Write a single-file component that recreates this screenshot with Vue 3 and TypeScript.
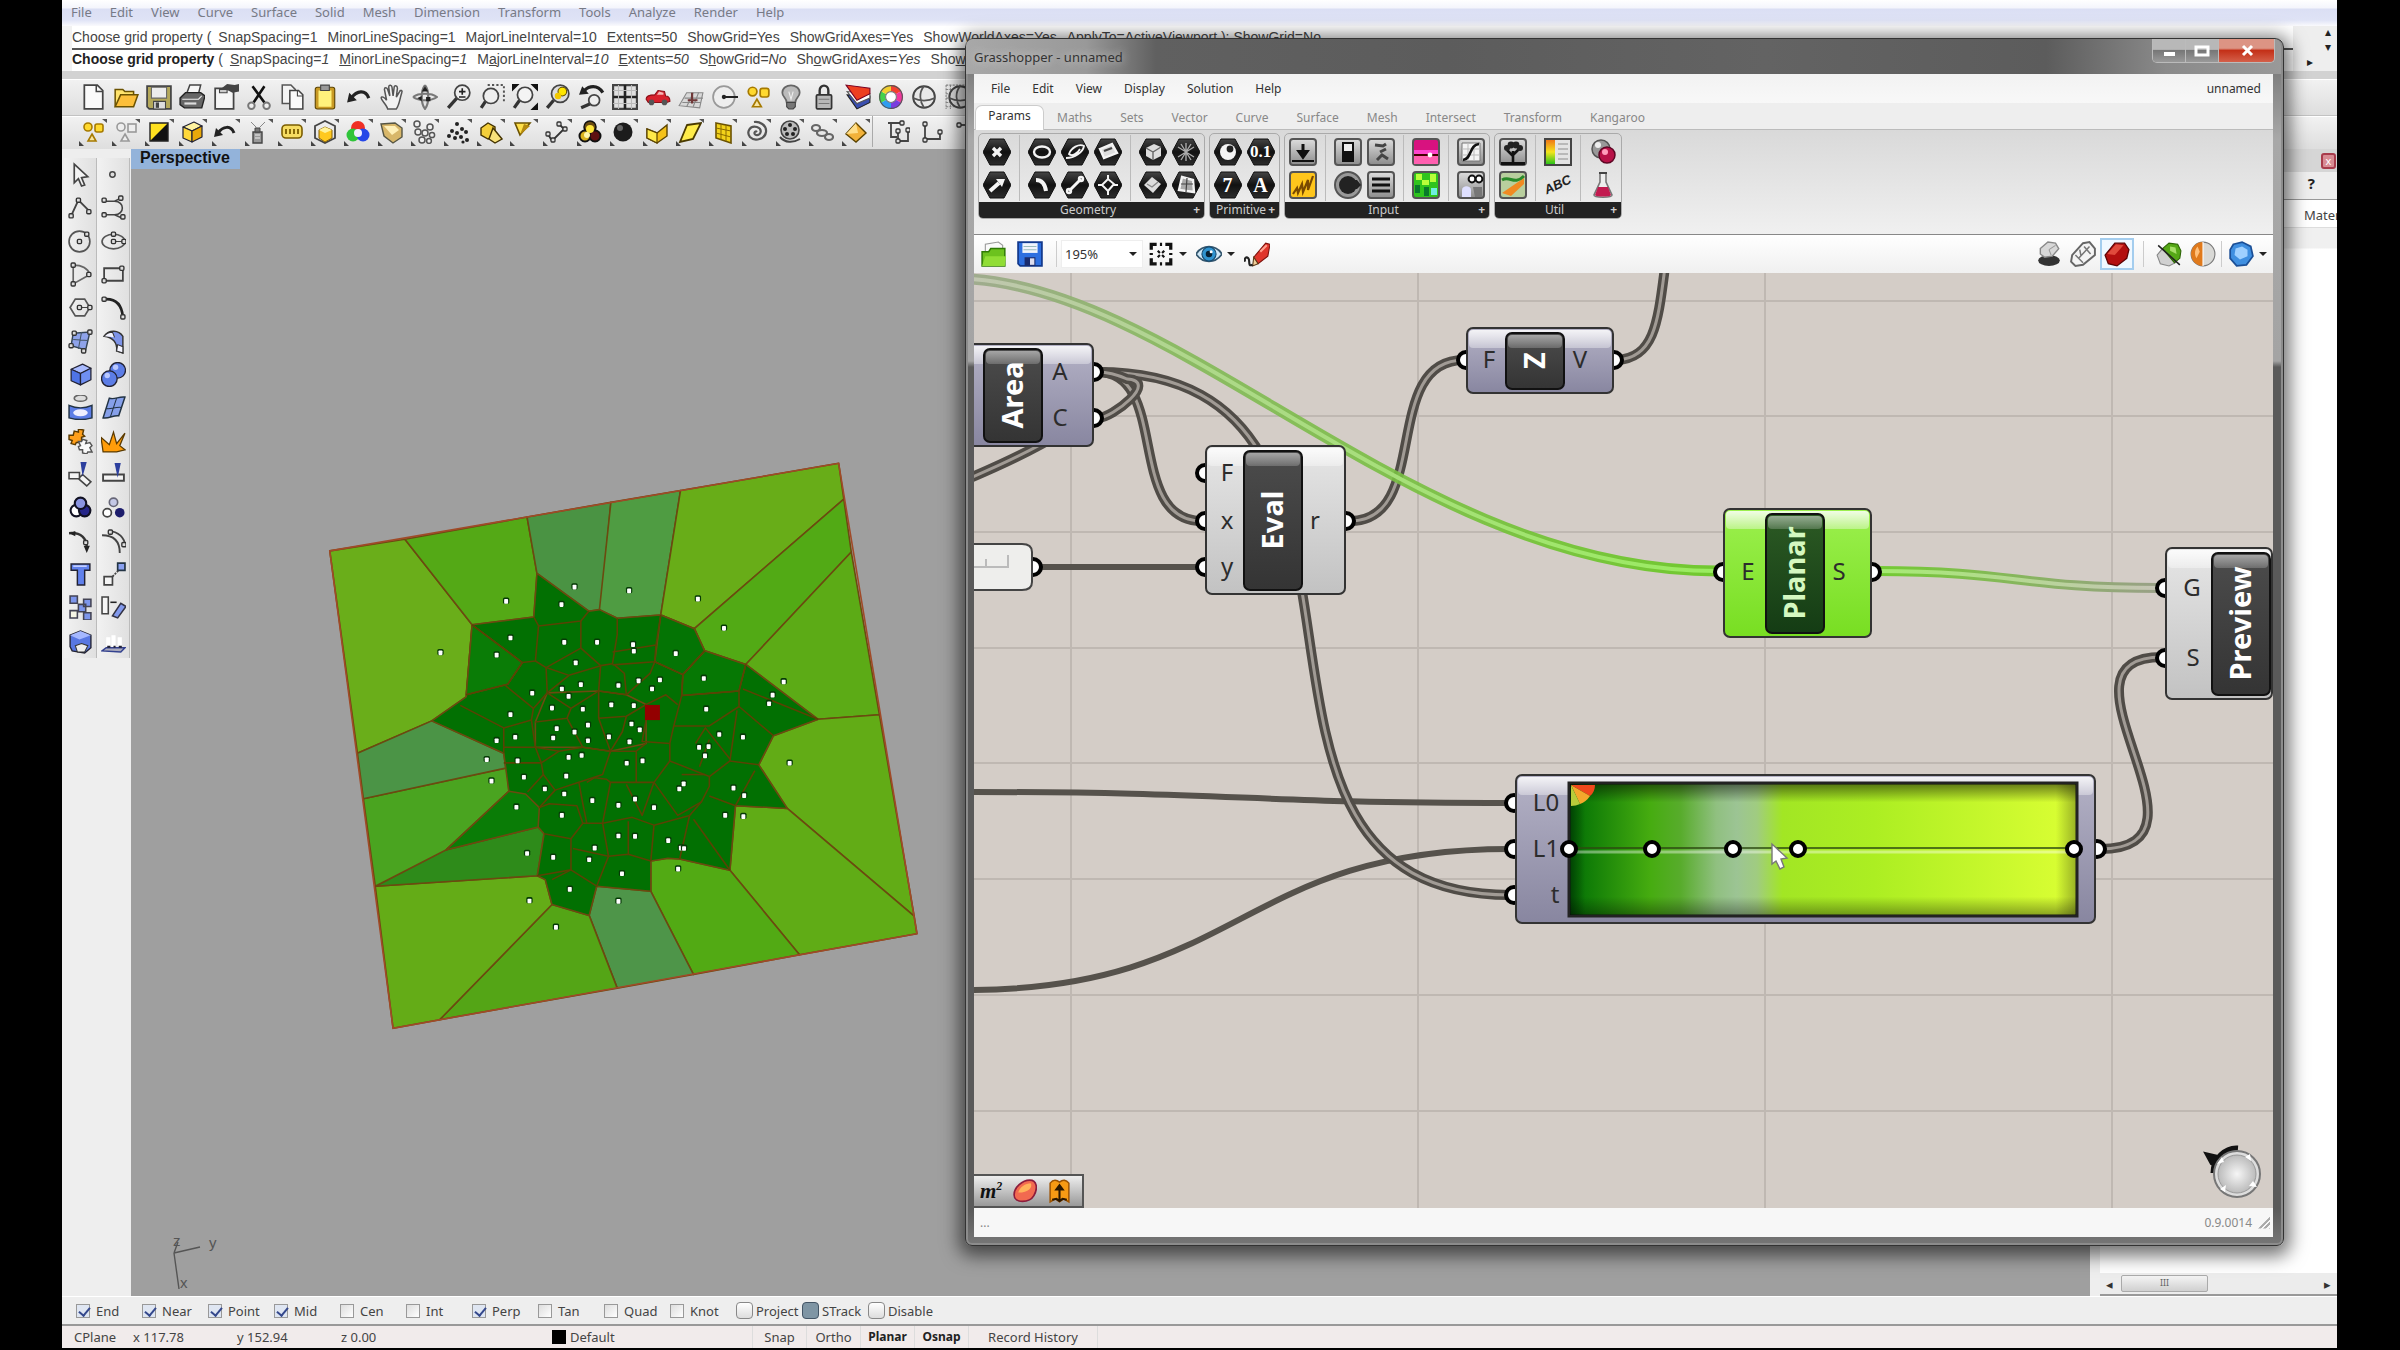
<script setup lang="ts">
import { ref } from 'vue'

const rhinoMenus = ['File', 'Edit', 'View', 'Curve', 'Surface', 'Solid', 'Mesh', 'Dimension', 'Transform', 'Tools', 'Analyze', 'Render', 'Help']

interface Option { name: string; value: string; key?: number }
const history: Option[] = [
  { name: 'SnapSpacing', value: '1' },
  { name: 'MinorLineSpacing', value: '1' },
  { name: 'MajorLineInterval', value: '10' },
  { name: 'Extents', value: '50' },
  { name: 'ShowGrid', value: 'Yes' },
  { name: 'ShowGridAxes', value: 'Yes' },
  { name: 'ShowWorldAxes', value: 'Yes' },
  { name: 'ApplyTo', value: 'ActiveViewport ): ShowGrid=No' }
]
const prompt: Option[] = [
  { name: 'SnapSpacing', value: '1', key: 0 },
  { name: 'MinorLineSpacing', value: '1', key: 0 },
  { name: 'MajorLineInterval', value: '10', key: 1 },
  { name: 'Extents', value: '50', key: 0 },
  { name: 'ShowGrid', value: 'No', key: 1 },
  { name: 'ShowGridAxes', value: 'Yes', key: 2 },
  { name: 'ShowWorldAxes', value: 'Yes', key: 3 }
]

const undoArrow = '<path d="M21 13C18 5 10 6 5 13" fill="none" stroke="#222" stroke-width="3"/><path d="M1 17l2-9 7 7z" fill="#222"/>'
const lens = (x: number, y: number, r: number, fill: string) =>
  `<path d="M${x - r + 2} ${y + r - 2}L2 22" stroke="#333" stroke-width="3"/><circle cx="${x}" cy="${y}" r="${r}" fill="${fill}" stroke="#444" stroke-width="1.6"/>`
const cube = (top: string, left: string, right: string) =>
  `<g stroke="#223" stroke-width="1.2" stroke-linejoin="round"><path d="M3 7l11-5 8 4-10 5z" fill="${top}"/><path d="M3 7l9 4v11l-9-4z" fill="${left}"/><path d="M12 11l10-5v11l-10 5z" fill="${right}"/></g>`
const pt = (x: number, y: number) => `<rect x="${x - 2}" y="${y - 2}" width="4" height="4" rx="1" fill="#ddd" stroke="#333" stroke-width="1.3"/>`

const icons: Record<string, string> = {
  new: '<path d="M4 1h12l5 5v17H4z" fill="#fafafa" stroke="#444" stroke-width="1.6"/><path d="M15 1v6h6" fill="none" stroke="#444" stroke-width="1.4"/>',
  open: '<path d="M2 21V5h7l2 2h8v4" fill="#ffe36b" stroke="#6b5200" stroke-width="1.4"/><path d="M2 21l5-11h16l-4 11z" fill="#fcbf3a" stroke="#6b5200" stroke-width="1.4"/>',
  save: '<path d="M1 2h22v21H3l-2-2z" fill="#b4a85a" stroke="#444" stroke-width="1.6"/><path d="M5 3h14v10H5z" fill="#ececec" stroke="#666"/><path d="M7 16h11v7H7z" fill="#ddd" stroke="#444"/><path d="M9 17h3v5H9z" fill="#444"/>',
  print: '<path d="M7 9l3-8h10l-2 8z" fill="#f6f6f6" stroke="#444" stroke-width="1.4"/><path d="M1 13l5-5h14l4 3-3 11H5l-4-3z" fill="#666" stroke="#222" stroke-width="1.3"/><path d="M3 14h15l3-3" stroke="#eee" fill="none"/><path d="M5 18h11" stroke="#ddd" stroke-width="2"/>',
  props: '<path d="M2 4h14l3 3v16H2z" fill="#f6f6f6" stroke="#444" stroke-width="1.6"/><path d="M8 4l5-4 7 1 4-1v7l-6 1-4-2z" fill="#444"/><path d="M6 5h7v3H6z" fill="#ccc" stroke="#444"/>',
  cut: '<path d="M6 2l11 15M17 2L7 17" stroke="#111" stroke-width="2.4"/><circle cx="5" cy="20" r="3" fill="#eee" stroke="#777" stroke-width="1.8"/><circle cx="19" cy="20" r="3" fill="#eee" stroke="#777" stroke-width="1.8"/>',
  copy: '<path d="M3 1h8l4 4v13H3z" fill="#f4f4f4" stroke="#555" stroke-width="1.4"/><path d="M10 6h8l4 4v13H10z" fill="#fafafa" stroke="#444" stroke-width="1.4"/><path d="M17 6v5h5" fill="none" stroke="#444"/>',
  paste: '<rect x="3" y="3" width="18" height="20" rx="2" fill="#c99a25" stroke="#5b4300"/><path d="M6 6h12v15H6z" fill="#fff27c"/><path d="M8 1h8v5H8z" fill="#999" stroke="#444"/>',
  undo: undoArrow,
  hand: '<path d="M8 23c-1-4-6-8-6-10s3-1 5 2L5 5c0-2 2-2 3 0l2 6-1-8c0-3 3-2 3 0l1 8 1-8c0-2 3-2 3 1l-1 8 3-5c1-2 3-1 2 1-2 6-2 11-5 15z" fill="#f2f2f2" stroke="#555" stroke-width="1.4"/>',
  rotate: '<path d="M1 12c5-4 17-4 22 0-5 4-17 4-22 0M12 1c-4 5-4 17 0 22 4-5 4-17 0-22" fill="none" stroke="#777" stroke-width="2"/><path d="M9 7l3-5 3 5zM5 13l4-2v5zM13 12h4v4h-4z" fill="#222"/>',
  zoomDyn: lens(15, 8, 7, '#eee') + '<path d="M12 7h6M15 4v6M12 12h6" stroke="#222" stroke-width="1.5"/>',
  zoomWin: '<path d="M8 1h15v16" fill="none" stroke="#555" stroke-width="1.8" stroke-dasharray="2 2"/>' + lens(11, 11, 7, '#eee'),
  zoomExt: '<path d="M0 0h7L0 7zM24 0v7l-7-7zM24 24h-7l7-7z" fill="#111"/>' + lens(12, 10, 7, '#f4f4f4'),
  zoomSel: lens(14, 9, 8, '#ddd') + '<circle cx="16" cy="7" r="4" fill="#ffe600" stroke="#665200"/><circle cx="12" cy="11" r="3" fill="#f2c900"/>',
  undoView: '<path d="M22 8C17 0 9 2 5 6" fill="none" stroke="#222" stroke-width="3"/><path d="M0 10l3-8 6 7z" fill="#222"/>' + lens(14, 15, 5, '#eee'),
  fourView: '<path d="M1 1h22v22H1z" fill="#e0e0e0" stroke="#444" stroke-width="2"/><path d="M12 1v22M1 12h22" stroke="#222" stroke-width="2.4"/><path d="M6 1v22M18 1v22M1 6h22M1 18h22" stroke="#bbb" stroke-width="1"/>',
  car: '<path d="M1 14c0-4 5-4 8-4l3-4 6 1 1 4c4 0 4 3 4 5l-3 1H3z" fill="#d8202c" stroke="#8b1018"/><circle cx="6" cy="17" r="2.6" fill="#555"/><circle cx="18" cy="17" r="2.6" fill="#555"/><path d="M11 10l2-3 4 1v2z" fill="#f6b5b5"/>',
  cplane: '<path d="M1 20l7-12h15l-3 14z" fill="#d8d8d8" stroke="#888"/><path d="M4 17h17M6 13h17M8 21l6-13M14 21l5-13" stroke="#888"/><path d="M9 15h9M13 18V8" stroke="#703838" stroke-width="2"/>',
  circleLine: '<circle cx="11" cy="12" r="10" fill="#eee" stroke="#999" stroke-width="1.6"/><path d="M11 12h13" stroke="#222" stroke-width="1.8"/><circle cx="11" cy="12" r="2" fill="#222"/>',
  shapes: '<circle cx="7" cy="7" r="4" fill="#ffd92e" stroke="#a67a00" stroke-width="1.6"/><rect x="14" y="4" width="8" height="8" rx="2" fill="#ffd92e" stroke="#a67a00" stroke-width="1.6"/><path d="M11 14l4 7H7z" fill="#f7e4a0" stroke="#a67a00" stroke-width="1.6"/>',
  greyShapes: '<circle cx="7" cy="7" r="4" fill="#eee" stroke="#999" stroke-width="1.6"/><rect x="14" y="4" width="8" height="8" fill="#eee" stroke="#999" stroke-width="1.6"/><path d="M11 14l4 7H7z" fill="#eee" stroke="#999" stroke-width="1.6"/>',
  bulb: '<path d="M8 17C8 13 4 12 4 8c0-9 16-9 16 0 0 4-4 5-4 9z" fill="#bbb" stroke="#666" stroke-width="1.6"/><path d="M8 17h8v4l-2 2h-4l-2-2z" fill="#777" stroke="#444"/><path d="M10 7l2 7 2-7" stroke="#eee" fill="none"/>',
  lock: '<path d="M8 11V6c0-6 8-6 8 0v5" fill="none" stroke="#333" stroke-width="2.2"/><rect x="5" y="10" width="14" height="13" rx="1" fill="#b8b8b8" stroke="#333" stroke-width="1.6"/><path d="M7 14h10M7 18h10" stroke="#777"/>',
  layers: '<path d="M2 10l9 13 12-6v-6z" fill="#3a4fb0" stroke="#222"/><path d="M2 7l9 11 12-5V9z" fill="#fff" stroke="#555"/><path d="M1 1l10 14L23 9V4z" fill="#ee3f20" stroke="#702"/>',
  globe: '<circle cx="12" cy="12" r="10" fill="#e8e8e8" stroke="#444" stroke-width="1.8"/><path d="M2 13c6 3 14 3 20 0M12 2c-5 6-4 14 0 20" fill="none" stroke="#555" stroke-width="1.6"/>',
  globeGrid: '<path d="M1 1h22M1 5h22M1 9h22M1 13h22M1 17h22M1 21h22M1 1v22M5 1v22" stroke="#888" stroke-dasharray="2 1"/><circle cx="14" cy="12" r="10" fill="#ddd" stroke="#444" stroke-width="1.8"/><path d="M4 13c6 3 14 3 20 0M14 2c-5 6-4 14 0 20" fill="none" stroke="#555" stroke-width="1.6"/>',
  wheel: '<g fill="none" stroke-width="6"><path d="M12 4a8 8 0 0 1 7 4" stroke="#f2402f"/><path d="M19 8a8 8 0 0 1 0 8" stroke="#f0389c"/><path d="M19 16a8 8 0 0 1-7 4" stroke="#7a3de0"/><path d="M12 20a8 8 0 0 1-7-4" stroke="#2f9df0"/><path d="M5 16a8 8 0 0 1 0-8" stroke="#43d14a"/><path d="M5 8a8 8 0 0 1 7-4" stroke="#f2cf2f"/></g><circle cx="12" cy="12" r="10.5" fill="none" stroke="#555"/><circle cx="12" cy="12" r="5" fill="#fff" stroke="#777"/>',
  half: '<path d="M3 3h18v18H3z" fill="#111"/><path d="M3 3h18L3 21z" fill="#ffe11f"/><path d="M3 3h18v18H3z" fill="none" stroke="#222" stroke-width="1.4"/>',
  yCube: cube('#fff3a0', '#ffd83a', '#e8a90a'),
  spray: '<path d="M7 12h9v11H7z" fill="#999" stroke="#444" stroke-width="1.4"/><path d="M9 8h5v4H9z" fill="#777" stroke="#444"/><path d="M11 8L5 2M13 8l6-6" stroke="#888"/><path d="M9 15h5M9 18h5" stroke="#eee"/>',
  wrap: '<rect x="2" y="5" width="20" height="13" rx="4" fill="#f6dc62" stroke="#7a5c00" stroke-width="1.6"/><path d="M6 9v5M10 9v5M14 9v5M18 9v5" stroke="#7a5c00" stroke-width="1.8"/>',
  cage: '<path d="M2 6l10-5 10 5v12l-10 5-10-5z" fill="none" stroke="#444" stroke-width="1.8"/><path d="M6 10l6-3 7 3v8l-7 4-6-4z" fill="#ffc91f" stroke="#8a6200"/><path d="M6 10l6 3 7-3-7-3z" fill="#fff39a"/>',
  rgb: '<circle cx="12" cy="8" r="7" fill="#f02f24"/><circle cx="7" cy="15" r="6.5" fill="#2fc43a"/><circle cx="17" cy="15" r="6.5" fill="#2547e8"/><circle cx="12" cy="13" r="4" fill="#eef"/>',
  chip: '<path d="M2 4l14-1 7 5v9l-9 6-9-7z" fill="#d8b76a" stroke="#554" stroke-width="1.4"/><path d="M5 6h11l4 4-7 5z" fill="#fff0b8"/>',
  circles: '<g fill="#eee" stroke="#555" stroke-width="1.5"><circle cx="5" cy="4" r="3"/><circle cx="18" cy="7" r="3"/><circle cx="6" cy="12" r="3"/><circle cx="13" cy="13" r="3"/><circle cx="20" cy="15" r="2.6"/><circle cx="10" cy="20" r="3"/><circle cx="17" cy="21" r="2.4"/></g>',
  dots: '<g fill="#222"><circle cx="12" cy="4" r="2"/><circle cx="17" cy="9" r="2"/><circle cx="7" cy="11" r="2"/><circle cx="12" cy="13" r="2"/><circle cx="21" cy="12" r="2"/><circle cx="4" cy="16" r="2"/><circle cx="10" cy="18" r="2"/><circle cx="16" cy="17" r="2"/><circle cx="22" cy="20" r="2"/><circle cx="18" cy="22" r="1.6"/></g>',
  solids: '<path d="M2 8l7-5 7 4v9l-7 3-7-4z" fill="#f4cf3a" stroke="#443300" stroke-width="1.4"/><path d="M14 8l9 11-7 4-6-4z" fill="#f9e27a" stroke="#443300" stroke-width="1.4"/>',
  flag: '<path d="M3 3h15L8 15z" fill="#ffe04a" stroke="#6b5200" stroke-width="1.6"/><path d="M12 4l6 2-10 9" fill="#b58a10"/>',
  poly: '<path d="M3 14l4 7L19 9l-5-5" fill="none" stroke="#333" stroke-width="1.8"/>' + pt(3, 14) + pt(8, 20) + pt(20, 9) + pt(14, 4),
  balls: '<circle cx="12" cy="7" r="6" fill="#6b4c10" stroke="#111" stroke-width="1.5"/><circle cx="7" cy="16" r="5.5" fill="#d9b21d" stroke="#111" stroke-width="2"/><circle cx="17" cy="16" r="5.5" fill="#5e1111" stroke="#111" stroke-width="2"/><circle cx="12" cy="9" r="4" fill="#ffe63c"/><circle cx="9" cy="15" r="3" fill="#fff7a8"/>',
  ball: '<circle cx="12" cy="12" r="9.5" fill="#1c1c1c"/><circle cx="9" cy="8" r="3" fill="#666"/>',
  box: '<path d="M2 9l10 4 10-8v11L12 23 2 18z" fill="#f5c21a" stroke="#5b4300" stroke-width="1.4"/><path d="M2 9l10 4v10L2 18z" fill="#ffe94a" stroke="#5b4300" stroke-width="1.2"/>',
  plane: '<path d="M9 5l14-2-8 16-13 3z" fill="#ffec4a" stroke="#4a3a00" stroke-width="1.8"/>',
  ygrid: '<path d="M5 3l15 3v17L5 18z" fill="#f2d21a" stroke="#6b5200" stroke-width="1.6"/><path d="M10 4v15M15 5v16M5 8l15 3M5 13l15 4" stroke="#8a6b00"/>',
  spiral: '<path d="M13 12c-2-2-4 2-1 3 5 1 7-6 1-8C6 5 2 12 6 17c5 5 15 2 16-5S15 1 10 2" fill="none" stroke="#555" stroke-width="2.2"/>',
  film: '<circle cx="13" cy="10" r="9" fill="#bbb" stroke="#444" stroke-width="1.6"/><g fill="#222"><circle cx="13" cy="5" r="2"/><circle cx="8" cy="9" r="2"/><circle cx="18" cy="9" r="2"/><circle cx="10" cy="14" r="2"/><circle cx="16" cy="14" r="2"/></g><path d="M3 17c5 6 13 6 20 2" fill="none" stroke="#444" stroke-width="2"/>',
  chain: '<g fill="none" stroke="#666" stroke-width="2.2"><ellipse cx="6" cy="8" rx="4" ry="3"/><ellipse cx="12" cy="13" rx="5" ry="3"/><ellipse cx="19" cy="17" rx="4" ry="3"/></g>',
  diamond: '<path d="M12 3l10 10-10 9L2 14z" fill="#f2b23a" stroke="#5b4300" stroke-width="1.4"/><path d="M12 3L2 14l12-1z" fill="#ffdf8a"/>',
  dimA: '<path d="M2 3h14M5 3v14h6M12 11v10h10V10" fill="none" stroke="#444" stroke-width="1.8"/>' + pt(16, 3) + pt(12, 11) + pt(22, 10) + pt(12, 21),
  dimB: '<path d="M5 3v16h15V10" fill="none" stroke="#444" stroke-width="1.8"/>' + pt(5, 4) + pt(20, 12) + pt(5, 20),
  dimC: '<path d="M4 5h18" fill="none" stroke="#444" stroke-width="1.8"/>' + pt(5, 5),

  select: '<path d="M6 2l13 12-6 1 3 7-3 1-3-7-4 4z" fill="#f4f4f4" stroke="#444" stroke-width="1.6"/>',
  point: '<circle cx="11" cy="12" r="2.6" fill="#ddd" stroke="#444" stroke-width="1.4"/>',
  polyline: '<path d="M3 20L10 5l11 11" fill="none" stroke="#444" stroke-width="1.8"/>' + pt(3, 20) + pt(10, 5) + pt(20, 16),
  curve: '<path d="M3 6h10c10 0 10 13 0 13H3M13 6l6-3M13 19l7 3" fill="none" stroke="#444" stroke-width="1.5"/>' + pt(3, 5) + pt(3, 19) + pt(19, 3) + pt(21, 21),
  circle: '<circle cx="11" cy="12" r="10" fill="none" stroke="#555" stroke-width="1.6"/>' + pt(11, 12) + pt(18, 5),
  ellipse: '<ellipse cx="12" cy="12" rx="11" ry="7" fill="none" stroke="#555" stroke-width="1.6"/><path d="M12 12h11" stroke="#444"/>' + pt(12, 12) + pt(12, 5) + pt(22, 12),
  arc: '<path d="M5 3c8 0 14 3 16 9L5 21z" fill="none" stroke="#666" stroke-width="1.6"/>' + pt(5, 3) + pt(20, 12) + pt(5, 21),
  rect: '<path d="M3 6h18v12H3z" fill="none" stroke="#444" stroke-width="1.7"/>' + pt(20, 6) + pt(3, 18),
  polygon: '<path d="M7 4h9l5 8-5 8H7l-5-8z" fill="none" stroke="#555" stroke-width="1.6"/><path d="M11 12h10" stroke="#444"/>' + pt(11, 12) + pt(21, 12),
  fillet: '<path d="M3 4c12-1 17 6 18 17" fill="none" stroke="#222" stroke-width="2.6"/>' + pt(3, 4) + pt(21, 21),
  surface: '<path d="M5 4l16-1-4 17-14-4z" fill="#8ea3ea" stroke="#345" stroke-width="1.4"/><path d="M13 3l-3 16M5 10l14 1" stroke="#456"/>' + pt(6, 4) + pt(21, 3) + pt(3, 16) + pt(15, 21),
  sweep: '<path d="M3 7c5-7 14-6 18 0v16l-6-2c1-8-4-13-12-14z" fill="#7d93e8" stroke="#333" stroke-width="1.4"/><path d="M3 7c2-3 5-4 8-4l2 5M15 21l6 2v-6l-5-2z" fill="#f4f4ff" stroke="#333"/>',
  cube: cube('#a9bbff', '#4f74e6', '#6f8ff2'),
  spheres: '<circle cx="16" cy="8" r="7.5" fill="#5c7de6" stroke="#223" stroke-width="1.3"/><circle cx="8" cy="16" r="7.5" fill="#5c7de6" stroke="#223" stroke-width="1.3"/><circle cx="14" cy="5" r="2.6" fill="#b9c8ff"/><circle cx="6" cy="13" r="2.6" fill="#b9c8ff"/>',
  project: '<ellipse cx="12" cy="3" rx="6" ry="3" fill="#ddd" stroke="#666" stroke-width="1.6"/><path d="M1 10c7 3 15 3 22 0v12c-7 2-15 2-22 0z" fill="#5c7de6" stroke="#234" stroke-width="1.4"/><ellipse cx="12" cy="17" rx="7" ry="3.4" fill="#eef"/>',
  mesh: '<path d="M8 3c5 2 9-2 15-1l-6 18c-5-1-9 3-15 2z" fill="#86a0ea" stroke="#234" stroke-width="1.4"/><path d="M5 13c5 1 9-2 15-1M15 3l-6 18" stroke="#234" fill="none"/>',
  puzzle: '<path d="M1 6l4 0 1-4 4 1 0-3 5 1-1 4 2 2-3 1 0 5-5 0-1 2-4-1 1-3-3-1z" fill="#ff9f1a" stroke="#5a3a00" stroke-width="1.4"/><path d="M10 12l3 0 1-2 4 1-1 3 4-1 2 3-2 2 2 4-4 0-1 2-4-1 0-3-3 0-1-3 2-1z" fill="#fafafa" stroke="#555" stroke-width="1.4"/>',
  explode: '<path d="M2 22L0 8l8 7 4-12 3 11 8-10-5 12 5 4-8 2z" fill="#ff9d0a" stroke="#5a3a00" stroke-width="1.2"/>',
  trim: '<path d="M1 10h10v6H1zM14 12l8 7-4 4-8-7z" fill="#f4f4f4" stroke="#444" stroke-width="1.5"/><path d="M12 0h6l-4 14z" fill="#2c3f9e"/>',
  split: '<path d="M2 12h20v6H2z" fill="#f4f4f4" stroke="#444" stroke-width="1.8"/><path d="M13 1h6l-3 14z" fill="#2c3f9e"/>',
  union: '<g stroke="#112" stroke-width="2"><circle cx="8" cy="15" r="5.5" fill="#fff"/><circle cx="16" cy="15" r="5.5" fill="#26268a"/><circle cx="12" cy="8" r="5.5" fill="#8a94e0"/></g>',
  ungroup: '<circle cx="12" cy="7" r="4" fill="#c4c8e6" stroke="#667" stroke-width="1.6"/><circle cx="6" cy="17" r="4" fill="#fff" stroke="#444" stroke-width="1.6"/><circle cx="18" cy="17" r="4.6" fill="#1d1d6c"/>',
  extend: '<path d="M1 4c12-1 17 5 17 14" fill="none" stroke="#333" stroke-width="2.4"/><path d="M1 4l6-2v5zM18 23l-3-7h6z" fill="#222"/>' + pt(17, 13),
  offset: '<path d="M1 6c12 0 17 7 17 17M7 2c10 0 16 7 16 14" fill="none" stroke="#444" stroke-width="1.8"/>' + pt(9, 3) + pt(22, 15),
  text: '<path d="M3 2h18v6h-5v14H9V8H3z" fill="#6181ec" stroke="#223" stroke-width="1.4"/><path d="M5 4h13" stroke="#c3cfff" stroke-width="1.6"/>',
  scale: '<path d="M3 14h8v8H3z" fill="#f4f4f4" stroke="#444" stroke-width="1.6"/><path d="M16 1h7v7h-7z" fill="#89a0f0" stroke="#234" stroke-width="1.6"/><path d="M11 14l6-6" stroke="#444" stroke-width="1.6" stroke-dasharray="2 1"/>',
  array: '<g stroke="#445" stroke-width="1.5"><path d="M2 1h7v7H2zM15 4h7v7h-7zM10 9h7v7h-7zM15 17h7v7h-7z" fill="#7d96ec"/><path d="M2 15h7v7H2z" fill="#f6f6e6"/></g>',
  orient: '<path d="M1 2h6v16H1z" fill="#f6f6f6" stroke="#444" stroke-width="1.5"/><path d="M9 7h6" stroke="#222" stroke-width="1.5"/><path d="M11 20L19 8l5 3-8 11z" fill="#8299ec" stroke="#334" stroke-width="1.5"/>',
  shell: '<path d="M2 6l10-4 10 4v12l-6 5-12-2-2-4z" fill="#5877e2" stroke="#223" stroke-width="1.3"/><path d="M2 6l9 4 11-4-10-4z" fill="#a5b8ff"/><path d="M7 16l6-2 6 2-3 6h-7z" fill="#eee" stroke="#333"/>',
  rib: '<path d="M1 21l4-3h18l-4 4z" fill="#aab" stroke="#33418f" stroke-width="1.4"/><path d="M7 8v9M12 6v11M18 8v9" stroke="#fff" stroke-width="4"/><path d="M6 17h3M12 17h2M17 17h3" stroke="#223" stroke-width="2"/>',

  gOpen: '<path d="M4 10V3l12-2 4 3v9" fill="#fafafa" stroke="#999"/><path d="M1 23V10h6l2-3h13v16z" fill="#6cc21e" stroke="#2f7a05" stroke-width="1.4"/><path d="M1 23l3-9h19l-1 9z" fill="#90dd35"/>',
  gSave: '<path d="M1 1h22v22H3l-2-2z" fill="#2d6fe0" stroke="#12398c" stroke-width="1.6"/><path d="M5 2h14v9H5z" fill="#f0f4fb"/><path d="M6 5h12M6 8h12" stroke="#9bb"/><path d="M7 15h10v8H7z" fill="#1a2c6e"/><path d="M12 16h4v6h-4z" fill="#dde"/>',
  gFit: '<path d="M3 8V3h5M16 3h5v5M21 16v5h-5M8 21H3v-5M11 3h2M11 21h2M3 11v2M21 11v2" fill="none" stroke="#111" stroke-width="3"/><path d="M9 9l2 2M15 9l-2 2M9 15l2-2M15 15l-2-2" stroke="#111" stroke-width="2"/>',
  gEye: '<path d="M0 12C6 3 18 3 24 12 18 21 6 21 0 12z" fill="#cfe8f7" stroke="#34566e" stroke-width="1.6"/><circle cx="12" cy="12" r="6.5" fill="#2f93cf" stroke="#154a70"/><circle cx="12" cy="12" r="3" fill="#062033"/><circle cx="14" cy="10" r="1.4" fill="#fff"/>',
  gBrush: '<path d="M9 15L20 2l4 1-2 11-9 7z" fill="#e0362c" stroke="#7c120c"/><path d="M15 10l6-6" stroke="#ff9f8c" stroke-width="2"/><path d="M9 15l4 6-5 2z" fill="#f1cf9a" stroke="#5b3b18"/><path d="M8 22C3 24 6 18 4 16s-4 0-3 3" fill="none" stroke="#222" stroke-width="2"/>',
  gShadow: '<ellipse cx="12" cy="18" rx="10" ry="5" fill="#333"/><path d="M4 7l7-6 7 1 3 5-6 7-7 1-4-3z" fill="#d8d8d8" stroke="#888" stroke-width="1.3"/><path d="M12 8l6-4M12 8l2 5" stroke="#999"/>',
  gWire: '<path d="M2 13L12 2l6-1 5 6v6L12 22l-7 1-4-4z" fill="#f4f4f4" stroke="#666" stroke-width="1.8"/><path d="M5 13l7 7M13 5l6 7M9 8l1 5M8 16l10-11" fill="none" stroke="#777" stroke-width="1.4"/>',
  gSolid: '<path d="M1 13L10 2l9 0 4 6-2 8-9 7-8-2z" fill="#b30f0f" stroke="#5e0404" stroke-width="1.2"/><path d="M3 12l8-9 7 1-8 9z" fill="#e04a3c"/>',
  gHalf: '<path d="M1 13l5-6 12 13-6 3-8-2z" fill="#d0d0d0" stroke="#888"/><path d="M6 7l6-5 8 1 3 6-1 7-5 4z" fill="#55a816" stroke="#2c6404"/><path d="M13 5l5 1 1 6-6-3z" fill="#a6df68"/><path d="M2 4l20 18" stroke="#222" stroke-width="1.4"/>',
  gOrange: '<circle cx="12" cy="12" r="11" fill="#d9d9d6" stroke="#777"/><path d="M12 1a11 11 0 0 0 0 22z" fill="#e07a1c"/><path d="M7 5c-3 3-3 8-1 11l3-6z" fill="#ffc07a"/><path d="M12 1v22" stroke="#fff"/>',
  gBlue: '<path d="M5 3l8-2 8 4 2 9-6 8-9 1-6-7 0-8z" fill="#3f8fe0" stroke="#1b4f96" stroke-width="1.6"/><path d="M7 7l6-2 5 3 0 6-7 3-5-4z" fill="#9fd0ff"/>'
}

const topRow = ['new', 'open', 'save', 'print', 'props', 'cut', 'copy', 'paste', 'undo', 'hand', 'rotate', 'zoomDyn', 'zoomWin', 'zoomExt', 'zoomSel', 'undoView', 'fourView', 'car', 'cplane', 'circleLine', 'shapes', 'bulb', 'lock', 'layers', 'wheel', 'globe', 'globeGrid']
const secondRow = ['shapes', 'greyShapes', 'half', 'yCube', 'undo', 'spray', 'wrap', 'cage', 'rgb', 'chip', 'circles', 'dots', 'solids', 'flag', 'poly', 'balls', 'ball', 'box', 'plane', 'ygrid', 'spiral', 'film', 'chain', 'diamond']
const dimRow = ['dimA', 'dimB', 'dimC']
const sideLeft = ['select', 'polyline', 'circle', 'arc', 'polygon', 'surface', 'cube', 'project', 'puzzle', 'trim', 'union', 'extend', 'text', 'array', 'shell']
const sideRight = ['point', 'curve', 'ellipse', 'rect', 'fillet', 'sweep', 'spheres', 'mesh', 'explode', 'split', 'ungroup', 'offset', 'scale', 'orient', 'rib']

const hex = (inner: string) =>
  `<path d="M7 1h14l7 13-7 13H7L0 14z" fill="url(#hexFill)" stroke="#111"/><g fill="none" stroke="#f4f4f4" stroke-width="2.4">${inner}</g>`
const tile = (inner: string, bg = 'url(#tileFill)') =>
  `<rect x="1" y="1" width="26" height="26" rx="3" fill="${bg}" stroke="#555" stroke-width="2"/>${inner}`

const ribbonIcons: Record<string, string> = {
  point: hex('<path d="M10 10l8 8M18 10l-8 8" stroke-width="3.4"/>'),
  vector: hex('<path d="M7 20l9-8" stroke-width="4"/><path d="M13 8h9l-3 8z" fill="#f4f4f4" stroke="none"/>'),
  circle: hex('<ellipse cx="14" cy="14" rx="8" ry="5.5"/>'),
  arc: hex('<path d="M8 9c6 0 9 4 10 11" stroke-width="4"/>'),
  curve: hex('<path d="M5 20c9 0 17-6 18-12-5-3-13 2-15 8 3 3 9-1 11-5" stroke-width="1.8"/>'),
  line: hex('<path d="M8 20L20 8" stroke-width="3"/><circle cx="8" cy="20" r="2"/><circle cx="20" cy="8" r="2"/>'),
  plane: hex('<path d="M6 11l12-5 5 9-13 5z" fill="#ddd"/><path d="M10 13l8-3" stroke="#444"/>'),
  rect: hex('<path d="M8 14l6-6 6 5-6 7zM4 14h5M19 14h5M14 4v4M14 20v4" stroke-width="2"/>'),
  box: hex('<path d="M7 10l8-4 7 3v9l-8 4-7-4z" fill="#ddd" stroke="none"/><path d="M7 10l7 4 8-5M14 14v8" stroke="#666" stroke-width="1.4"/>'),
  brep: hex('<path d="M5 14l8-8 9 7-8 9z" fill="#ddd" stroke="none"/><path d="M8 13l5 3 6-5" stroke="#888" stroke-width="1.4"/>'),
  mesh: hex('<path d="M14 5v18M6 9l16 10M6 19L22 9M9 6l10 16M19 6L9 22" stroke="#aaa" stroke-width="1.4"/>'),
  surface: hex('<path d="M10 6l11 3 1 12-15-2z" fill="#aaa"/><path d="M9 13h12M15 7l-1 14" stroke="#444" stroke-width="1.2"/>'),
  bool: hex('<circle cx="14" cy="14" r="8" fill="#f4f4f4" stroke="none"/><circle cx="16" cy="11" r="3.4" fill="#222" stroke="none"/>'),
  tree: tile('<path d="M14 25V13M14 18l-6-6M14 17l6-6" stroke="#111" stroke-width="2.6"/><circle cx="8" cy="10" r="3" fill="#222"/><circle cx="12" cy="7" r="3.4" fill="#222"/><circle cx="17" cy="7" r="3.4" fill="#222"/><circle cx="21" cy="10" r="3" fill="#222"/><path d="M2 24h24v3H2z" fill="#111"/>'),
  import: tile('<path d="M14 6v12" stroke="#111" stroke-width="3"/><path d="M9 13h10l-5 7zM3 23h22" fill="#111" stroke="#111" stroke-width="2"/>'),
  sketch: tile('<path d="M4 23l4-6 1 5 4-9 1 8 5-12 0 10 5-14" fill="none" stroke="#7a4a00" stroke-width="2.2"/>', '#ffc61c'),
  slider: tile('<path d="M9 5h10v18H9z" fill="#eee" stroke="#111" stroke-width="2"/><path d="M10 13h8v9h-8z" fill="#111"/>'),
  knob: '<circle cx="14" cy="14" r="13" fill="#999" stroke="#555" stroke-width="2"/><circle cx="14" cy="14" r="9" fill="#222"/><path d="M14 9h9l4 5-4 4h-9z" fill="#222"/>',
  scroll: tile('<path d="M8 7l8 1 3-2M13 14l6-3M10 22l5-5 6 4" fill="none" stroke="#444" stroke-width="3"/>'),
  list: tile('<path d="M5 8h18M5 14h18M5 20h18" stroke="#111" stroke-width="3"/>'),
  gradient: tile('<path d="M2 12h24v4H2z" fill="#f4c"/><path d="M2 17c8-5 16 6 24-2v11H2z" fill="#ff5fb0"/><path d="M2 17h24" stroke="#400" stroke-width="2"/><circle cx="18" cy="17" r="2.4" fill="#fff"/>', '#d8127f'),
  image: tile('<path d="M4 3h6v6H4zM10 9h7v5h-7zM18 3h6v8h-6z" fill="#b8ff3a"/><path d="M3 14h5v8H3zM12 16h5v9h-5z" fill="#087a2a"/><path d="M19 17h6v7h-6z" fill="#6ff0e0"/>', '#2fc41d'),
  graph: tile('<path d="M5 5h18v18H5z" fill="#f4f4f4" stroke="#777"/><path d="M11 5v18M17 5v18M5 11h18M5 17h18" stroke="#bbb"/><path d="M6 22c9-1 6-15 16-16" fill="none" stroke="#111" stroke-width="2.6"/>'),
  reader: tile('<circle cx="15" cy="8" r="3.4" fill="#fff" stroke="#111" stroke-width="2"/><circle cx="22" cy="8" r="3.4" fill="#fff" stroke="#111" stroke-width="2"/><path d="M5 19c0-5 9-5 9 0v7H5z" fill="#dfe0ff"/><path d="M16 16h9v10h-7z" fill="#777"/>'),
  map: tile('<path d="M3 22L25 7v6L12 25z" fill="#f08a22"/><path d="M3 9c8-5 12 6 22-4" fill="none" stroke="#2a8a2a" stroke-width="3"/>', '#b9cf9e'),
  legend: '<path d="M1 1h26v26H1z" fill="#e4e4e4" stroke="#444" stroke-width="2"/><path d="M2 2h9v24H2z" fill="url(#legendFill)"/><path d="M14 6h10M14 11h10M14 16h10M14 21h10" stroke="#aaa" stroke-width="1.5"/>',
  spheres: '<circle cx="12" cy="11" r="9" fill="#999" stroke="#555" stroke-width="1.5"/><circle cx="9" cy="7" r="3" fill="#eee"/><circle cx="18" cy="17" r="8" fill="#b81248" stroke="#5e0624" stroke-width="1.5"/><circle cx="16" cy="14" r="3" fill="#ff9dbb"/>',
  flask: '<path d="M11 2h6v9l6 13c0 3-18 3-18 0l6-13z" fill="#eee" stroke="#777" stroke-width="1.6"/><path d="M9 16h10l3 8c0 2-16 2-16 0z" fill="#c21a4f"/><path d="M10 2h8" stroke="#444" stroke-width="2"/>',
  pi: hex(''), num: hex(''), str: hex(''), abc: ''
}
const glyphs: Record<string, string> = { pi: '0.1', num: '7', str: 'A', abc: 'ABC' }

interface Panel { title: string; groups: string[][] }
const panels: Panel[] = [
  { title: 'Geometry', groups: [['point', 'vector'], ['circle', 'arc', 'curve', 'line', 'plane', 'rect'], ['box', 'brep', 'mesh', 'surface']] },
  { title: 'Primitive', groups: [['bool', 'num', 'pi', 'str']] },
  { title: 'Input', groups: [['import', 'sketch'], ['slider', 'knob', 'scroll', 'list'], ['gradient', 'image'], ['graph', 'reader']] },
  { title: 'Util', groups: [['tree', 'map'], ['legend', 'abc'], ['spheres', 'flask']] }
]
const ghMenus = ['File', 'Edit', 'View', 'Display', 'Solution', 'Help']
const ghTabs = ['Params', 'Maths', 'Sets', 'Vector', 'Curve', 'Surface', 'Mesh', 'Intersect', 'Transform', 'Kangaroo']

const snaps = ref([
  { label: 'End', on: true }, { label: 'Near', on: true }, { label: 'Point', on: true }, { label: 'Mid', on: true },
  { label: 'Cen', on: false }, { label: 'Int', on: false }, { label: 'Perp', on: true }, { label: 'Tan', on: false },
  { label: 'Quad', on: false }, { label: 'Knot', on: false }
])
const modes = [{ label: 'Project', on: false }, { label: 'STrack', on: true }, { label: 'Disable', on: false }]

interface Port { label: string; x: number; y: number }
interface Node { name: string; kind: string; x: number; y: number; w: number; h: number; ix: number; left: Port[]; right: Port[] }
const nodes: Node[] = [
  { name: 'Area', kind: 'lav', x: 940, y: 343, w: 153, h: 102, ix: 984, left: [], right: [{ label: 'A', x: 1060, y: 371 }, { label: 'C', x: 1060, y: 417 }] },
  { name: 'Eval', kind: 'grey', x: 1206, y: 445, w: 139, h: 148, ix: 1244, left: [{ label: 'F', x: 1227, y: 472 }, { label: 'x', x: 1227, y: 520 }, { label: 'y', x: 1227, y: 566 }], right: [{ label: 'r', x: 1315, y: 520 }] },
  { name: 'Z', kind: 'lav', x: 1467, y: 327, w: 146, h: 65, ix: 1506, left: [{ label: 'F', x: 1489, y: 359 }], right: [{ label: 'V', x: 1580, y: 359 }] },
  { name: 'Planar', kind: 'green', x: 1724, y: 508, w: 147, h: 128, ix: 1766, left: [{ label: 'E', x: 1748, y: 571 }], right: [{ label: 'S', x: 1839, y: 571 }] },
  { name: 'Preview', kind: 'grey', x: 2166, y: 547, w: 106, h: 151, ix: 2212, left: [{ label: 'G', x: 2192, y: 587 }, { label: 'S', x: 2193, y: 657 }], right: [] }
]
const stops = [1569, 1652, 1733, 1798, 2074]
const wires = [
  'M1098 371C1170 371 1125 520 1202 520',
  'M1098 371C1440 371 1180 894 1510 894',
  'M1098 417C1112 417 1160 380 1127 378C1118 374 1108 371 1098 371',
  'M970 477C1010 460 1040 445 1064 430',
  'M1350 520C1432 520 1380 359 1464 359',
  'M1617 359C1655 357 1658 320 1665 266',
  'M2100 848C2230 848 2040 656 2162 656'
]
const thinWires = ['M1036 566H1202', 'M970 791C1242 791 1242 802 1510 802', 'M970 989C1240 988 1240 848 1510 848']

interface Cell { fill: string; points: string }
const cells: Cell[] = [
  { fill: '#6aae1a', points: '50,285 240,255 410,475 395,660 308,722 120,805' },
  { fill: '#54a916', points: '240,255 549,198 574,343 566,455 410,475' },
  { fill: '#4a9343', points: '549,198 761,160 735,436 705,440 574,343' },
  { fill: '#4f9c42', points: '761,160 937,130 887,450 777,458 732,436' },
  { fill: '#68ad18', points: '937,130 1337,60 1350,152 972,485 887,450' },
  { fill: '#52aa15', points: '1350,152 1369,288 1102,577 998,542 972,485' },
  { fill: '#5cab16', points: '1369,288 1440,706 1285,718 1102,577' },
  { fill: '#62ac16', points: '1440,706 1528,1224 1207,947 1135,835 1172,760 1285,718' },
  { fill: '#60ac16', points: '1528,1224 1535,1269 1238,1323 1062,1106 1076,940 1207,947' },
  { fill: '#52aa14', points: '1062,1106 1238,1323 970,1374 862,1160 862,1082 905,1075 935,1077' },
  { fill: '#4e9549', points: '862,1160 970,1374 777,1409 706,1222 725,1147' },
  { fill: '#54a516', points: '706,1222 777,1409 328,1490 612,1194' },
  { fill: '#64ac17', points: '612,1194 328,1490 210,1512 165,1147 575,1120 595,1130' },
  { fill: '#2e8b1a', points: '165,1147 345,1053 577,995 592,1012 575,1120' },
  { fill: '#4aa420', points: '135,922 498,843 503,903 345,1053 165,1147' },
  { fill: '#4b9446', points: '120,805 308,722 490,805 495,843 135,922' },
  { fill: '#027002', points: '410,475 566,455 574,343 705,440 732,436 777,458 887,450 972,485 998,542 1102,577 1285,718 1172,760 1135,835 1207,947 1076,940 1062,1106 935,1077 905,1075 862,1082 862,1160 725,1147 706,1222 612,1194 595,1130 575,1120 592,1012 577,995 345,1053 503,903 495,843 490,805 308,722 395,660' },
  { fill: '#0a7c06', points: '345,1053 503,903 545,910 580,945 577,995' },
  { fill: '#0a7c06', points: '410,475 537,572 500,628 395,655' },
  { fill: '#067804', points: '943,603 998,542 1102,577 1085,645 940,657' },
  { fill: '#047404', points: '887,450 972,485 998,542 943,603 872,570' },
  { fill: '#016a01', points: '600,650 730,645 800,655 850,680 850,780 760,800 690,790 570,790 570,725' }
]
const edges = [
  '410,475 537,572 500,628 395,655', '566,455 578,478 570,568 537,572', '578,478 685,465 705,440', '685,465 685,535 597,585 570,568',
  '685,535 735,580 765,575 777,500 777,458', '735,580 655,605 597,585', '597,585 600,650 565,690 495,632', '565,690 560,720 490,740 380,682',
  '490,740 490,805', '560,720 570,790 490,790', '765,545 875,527 887,450', '875,527 872,570 765,578', '872,570 943,603 998,542',
  '943,603 940,657 1085,645 1102,577', '1095,640 1285,718', '1085,645 1085,685 1172,760', '1085,685 1010,735 920,735 940,657',
  '735,580 730,645 800,655 860,600 872,570', '1080,695 1062,825 1135,835', '600,650 655,605', '600,650 660,690 730,645', '660,690 650,715 570,725',
  '730,645 730,715 800,710 850,680', '650,715 690,790 760,800 730,715', '800,710 790,750 760,800', '850,680 900,655 930,680', '850,720 840,775 910,780 920,735',
  '800,655 795,600 770,578', '690,790 630,800 570,790 585,830 490,830', '590,860 550,905', '585,830 590,860 620,900 580,945', '585,830 630,800',
  '620,900 680,880 740,860 760,800', '680,880 690,935 700,985', '700,880 720,868 750,872 760,880 740,985', '760,880 870,880 910,825', '825,800 825,880',
  '760,800 825,800 850,780', '910,780 910,825 1010,865 1062,825', '870,880 930,965 990,930 1010,890 1010,865', '1125,850 1076,940', '800,885 840,965 870,880',
  '580,945 605,935 675,940 690,985 660,1025 592,1012', '690,985 740,985 815,970 870,990 960,965', '660,1025 660,1105 575,1120', '740,985 755,1070 725,1147 660,1105 612,1130',
  '755,1070 665,1050', '755,1070 805,1065 862,1082', '805,980 805,1065', '870,990 862,1082', '960,965 935,1077', '970,975 1062,1106', '990,930 960,965', '1010,915 1076,940',
  '975,780 1000,740 1062,820', '940,860 1000,860', '985,840 1010,770'
]
const seeds = '330,546 496,414 636,422 669,377 807,387 981,408 1047,483 507,508 472,552 643,519 726,519 817,525 819,542 925,548 672,572 996,612 1198,621 562,650 637,639 654,658 685,628 780,630 831,618 885,616 865,639 1170,655 1161,677 507,705 612,688 690,691 762,680 819,682 1002,691 813,729 834,744 624,741 669,750 703,732 615,765 703,772 756,762 808,775 519,763 472,772 1035,756 1095,763 984,789 1008,787 999,811 447,821 525,824 654,815 687,810 801,830 841,824 1213,830 459,876 541,866 648,863 594,896 643,909 714,926 780,938 822,922 870,944 934,896 945,883 1071,894 1098,913 522,943 637,964 1050,964 1096,967 549,1062 615,1072 720,1048 706,1078 780,1017 822,1018 906,1029 938,1048 946,1049 789,1114 931,1102 657,1154 555,1184 780,1185 622,1252'
  .split(' ').map((p) => p.split(',').map(Number))
</script>

<template>
  <div class="desktop">
    <main class="rhino">
      <nav class="menubar" aria-label="Main menu">
        <button v-for="m in rhinoMenus" :key="m" type="button">{{ m }}</button>
      </nav>
      <div class="command">
        <div class="lines">
          <p class="line">
            <span class="lead">Choose grid property (</span>
            <span v-for="o in history" :key="o.name">{{ o.name }}={{ o.value }}</span>
          </p>
          <p class="line entry">
            <span class="lead"><b>Choose grid property</b> (</span>
            <span v-for="o in prompt" :key="o.name">{{ o.name.slice(0, o.key) }}<u>{{ o.name[o.key ?? 0] }}</u>{{ o.name.slice((o.key ?? 0) + 1) }}=<i>{{ o.value }}</i></span>
          </p>
        </div>
        <div class="scroller"><span>▴</span><span>▾</span><span class="more">▸</span></div>
      </div>
      <div class="bar">
        <div class="strip">
          <button v-for="(n, i) in topRow" :key="i" type="button" :aria-label="n"><svg viewBox="0 0 24 24" v-html="icons[n]"></svg></button>
        </div>
      </div>
      <div class="bar second">
        <div class="strip tools">
          <button v-for="(n, i) in secondRow" :key="i" type="button" class="marked" :aria-label="n"><svg viewBox="0 0 24 24" v-html="icons[n]"></svg></button>
        </div>
        <div class="strip dims">
          <button v-for="n in dimRow" :key="n" type="button" :aria-label="n"><svg viewBox="0 0 24 24" v-html="icons[n]"></svg></button>
        </div>
      </div>

      <section class="work">
        <aside class="palette">
          <div v-for="(col, c) in [sideLeft, sideRight]" :key="c" class="col">
            <button v-for="n in col" :key="n" type="button" :aria-label="n"><svg viewBox="0 0 24 24" v-html="icons[n]"></svg></button>
          </div>
        </aside>
        <div class="viewport">
          <h2>Perspective</h2>
          <svg class="voronoi" viewBox="0 0 1568 1568" preserveAspectRatio="none">
            <g stroke="#6b4a10" stroke-width="4" stroke-linejoin="round">
              <polygon v-for="(c, i) in cells" :key="i" :points="c.points" :fill="c.fill" />
            </g>
            <g fill="none" stroke="#5a4204" stroke-width="4" stroke-linejoin="round">
              <polyline v-for="(e, i) in edges" :key="i" :points="e" />
            </g>
            <polygon points="50,285 1337,60 1535,1269 210,1512" fill="none" stroke="#a04a28" stroke-width="4" />
            <rect x="847" y="681" width="38" height="39" fill="#930000" />
            <g v-for="(s, i) in seeds" :key="i">
              <rect :x="s[0] - 8" :y="s[1] - 9" width="16" height="16" rx="4" fill="#063a06" />
              <rect :x="s[0] - 5" :y="s[1] - 5" width="10" height="12" rx="2" fill="#fff" />
            </g>
          </svg>
          <svg class="axes" viewBox="0 0 56 64">
            <path d="M7 21L33 15M7 21l5 36M7 21l4-11" fill="none" stroke="#555" stroke-width="1.4" />
            <text x="6" y="14">z</text><text x="42" y="16">y</text><text x="13" y="56">x</text>
          </svg>
        </div>
        <aside class="panel">
          <div class="grip"><button type="button" aria-label="Close panel">x</button></div>
          <div class="ptools"><b>?</b></div>
          <div class="phead">Material</div>
          <div class="pbody"></div>
          <div class="hscroll"><span>◂</span><span class="thumb">III</span><span class="end">▸</span></div>
        </aside>
      </section>

      <section class="osnap">
        <label v-for="s in snaps" :key="s.label"><input v-model="s.on" type="checkbox" />{{ s.label }}</label>
        <button v-for="m in modes" :key="m.label" type="button" class="mode"><i :class="{ on: m.on }"></i>{{ m.label }}</button>
      </section>
      <footer class="status">
        <span class="cplane">CPlane</span>
        <span class="coord">x 117.78</span>
        <span class="coord">y 152.94</span>
        <span class="zed">z 0.00</span>
        <span class="layer"><i></i>Default</span>
        <button type="button">Snap</button>
        <button type="button">Ortho</button>
        <button type="button" class="on">Planar</button>
        <button type="button" class="on">Osnap</button>
        <button type="button" class="rec">Record History</button>
      </footer>

      <section class="gh">
        <header class="title">
          <h1>Grasshopper - unnamed</h1>
          <div class="caption">
            <button type="button" aria-label="Minimize"><svg viewBox="0 0 32 22"><path d="M11 14h11" stroke="#fff" stroke-width="4" /></svg></button>
            <button type="button" aria-label="Maximize"><svg viewBox="0 0 32 22"><path d="M10 7h12v8H10z" fill="none" stroke="#fff" stroke-width="3" /></svg></button>
            <button type="button" class="close" aria-label="Close"><svg viewBox="0 0 32 22"><path d="M12 6l9 9M21 6l-9 9" stroke="#fff" stroke-width="3" /></svg></button>
          </div>
        </header>
        <div class="inner">
          <nav class="ghmenu">
            <button v-for="m in ghMenus" :key="m" type="button">{{ m }}</button>
            <span class="doc">unnamed</span>
          </nav>
          <div class="tabs" role="tablist">
            <button v-for="(t, i) in ghTabs" :key="t" type="button" role="tab" :class="{ active: i === 0 }">{{ t }}</button>
          </div>
          <div class="ribbon">
            <div v-for="p in panels" :key="p.title" class="rpanel">
              <div class="groups">
                <div v-for="(g, gi) in p.groups" :key="gi" class="group">
                  <button v-for="n in g" :key="n" type="button" :aria-label="n">
                    <svg viewBox="0 0 28 28" v-html="ribbonIcons[n]"></svg>
                    <span v-if="glyphs[n]" :class="['glyph', n]">{{ glyphs[n] }}</span>
                  </button>
                </div>
              </div>
              <div class="rname"><span>{{ p.title }}</span><b>+</b></div>
            </div>
          </div>
          <div class="ghtools">
            <button type="button" class="t1" aria-label="Open"><svg viewBox="0 0 24 24" v-html="icons.gOpen"></svg></button>
            <button type="button" class="t1" aria-label="Save"><svg viewBox="0 0 24 24" v-html="icons.gSave"></svg></button>
            <i class="sep"></i>
            <label class="zoom"><select aria-label="Zoom"><option>195%</option></select><em></em></label>
            <button type="button" class="t2" aria-label="Zoom extents"><svg viewBox="0 0 24 24" v-html="icons.gFit"></svg><em></em></button>
            <button type="button" class="t2" aria-label="Named views"><svg viewBox="0 0 24 24" v-html="icons.gEye"></svg><em></em></button>
            <button type="button" class="t1" aria-label="Sketch"><svg viewBox="0 0 24 24" v-html="icons.gBrush"></svg></button>
            <span class="fill"></span>
            <button type="button" class="t3" aria-label="No preview"><svg viewBox="0 0 24 24" v-html="icons.gShadow"></svg></button>
            <button type="button" class="t3" aria-label="Wireframe preview"><svg viewBox="0 0 24 24" v-html="icons.gWire"></svg></button>
            <button type="button" class="t3 picked" aria-label="Shaded preview"><svg viewBox="0 0 24 24" v-html="icons.gSolid"></svg></button>
            <i class="sep wide"></i>
            <button type="button" class="t3" aria-label="Selected only"><svg viewBox="0 0 24 24" v-html="icons.gHalf"></svg></button>
            <button type="button" class="t3" aria-label="Document preview"><svg viewBox="0 0 24 24" v-html="icons.gOrange"></svg></button>
            <i class="sep near"></i>
            <button type="button" class="t2" aria-label="Mesh quality"><svg viewBox="0 0 24 24" v-html="icons.gBlue"></svg><em></em></button>
          </div>
          <div class="canvas">
            <svg class="graph" viewBox="974 272 1299 936" preserveAspectRatio="xMinYMin slice">
              <defs>
                <linearGradient id="hexFill" x2="0" y2="1"><stop stop-color="#444" /><stop offset=".5" stop-color="#111" /><stop offset="1" stop-color="#2c2c2c" /></linearGradient>
                <linearGradient id="tileFill" x2="0" y2="1"><stop stop-color="#ddd" /><stop offset="1" stop-color="#8c8c8c" /></linearGradient>
                <linearGradient id="legendFill" x2="0" y2="1"><stop stop-color="#f07818" /><stop offset=".5" stop-color="#f4e41c" /><stop offset="1" stop-color="#2cc41c" /></linearGradient>
                <linearGradient id="lav" x2="0" y2="1"><stop stop-color="#b4b2c6" /><stop offset="1" stop-color="#8886a0" /></linearGradient>
                <linearGradient id="grey" x2="0" y2="1"><stop stop-color="#e6e6e6" /><stop offset="1" stop-color="#c2c2c2" /></linearGradient>
                <linearGradient id="green" x2="0" y2="1"><stop stop-color="#9cf04e" /><stop offset="1" stop-color="#78de22" /></linearGradient>
                <linearGradient id="dark" x2="0" y2="1"><stop stop-color="#4c4c4c" /><stop offset="1" stop-color="#343434" /></linearGradient>
                <linearGradient id="darkgreen" x2="0" y2="1"><stop stop-color="#2c5a24" /><stop offset="1" stop-color="#143c14" /></linearGradient>
                <linearGradient id="gloss" x2="0" y2="1"><stop stop-color="#fff" stop-opacity=".85" /><stop offset="1" stop-color="#fff" stop-opacity=".35" /></linearGradient>
                <linearGradient id="gloss2" x2="0" y2="1"><stop stop-color="#fff" stop-opacity=".5" /><stop offset="1" stop-color="#fff" stop-opacity=".2" /></linearGradient>
                <linearGradient id="ramp"><stop stop-color="#006e04" /><stop offset=".16" stop-color="#46ac10" /><stop offset=".22" stop-color="#58ac2c" /><stop offset=".29" stop-color="#90c080" /><stop offset=".33" stop-color="#9cc494" /><stop offset=".37" stop-color="#a0cc80" /><stop offset=".42" stop-color="#a2e624" /><stop offset=".6" stop-color="#acee22" /><stop offset="1" stop-color="#dcff34" /></linearGradient>
                <linearGradient id="shadeY" x2="0" y2="1"><stop stop-color="#000" stop-opacity=".5" /><stop offset=".14" stop-color="#000" stop-opacity="0" /><stop offset=".86" stop-color="#000" stop-opacity="0" /><stop offset="1" stop-color="#000" stop-opacity=".35" /></linearGradient>
                <linearGradient id="shadeX"><stop stop-color="#000" stop-opacity=".4" /><stop offset=".03" stop-color="#000" stop-opacity="0" /><stop offset=".96" stop-color="#000" stop-opacity="0" /><stop offset="1" stop-color="#000" stop-opacity=".3" /></linearGradient>
                <linearGradient id="fadeIn" gradientUnits="userSpaceOnUse" x1="974" x2="1720" y1="0" y2="0"><stop stop-color="#9aa888" /><stop offset=".25" stop-color="#85b85c" /><stop offset="1" stop-color="#66c81e" /></linearGradient>
                <linearGradient id="fadeInCore" gradientUnits="userSpaceOnUse" x1="974" x2="1720" y1="0" y2="0"><stop stop-color="#c0c6b0" /><stop offset=".3" stop-color="#aed88a" /><stop offset="1" stop-color="#9aec60" /></linearGradient>
                <linearGradient id="fadeOut" gradientUnits="userSpaceOnUse" x1="1870" x2="2160" y1="0" y2="0"><stop stop-color="#72cc30" /><stop offset="1" stop-color="#9aa088" /></linearGradient>
                <linearGradient id="fadeOutCore" gradientUnits="userSpaceOnUse" x1="1870" x2="2160" y1="0" y2="0"><stop stop-color="#a4ec70" /><stop offset="1" stop-color="#c6c4b6" /></linearGradient>
                <radialGradient id="compass"><stop stop-color="#f6f6f6" /><stop offset="1" stop-color="#bbb" /></radialGradient>
              </defs>
              <path d="M1071 272V1208M1418 272V1208M1765 272V1208M2112 272V1208M974 300H2273M974 415H2273M974 531H2273M974 647H2273M974 762H2273M974 878H2273M974 994H2273M974 1110H2273" stroke="#bfb8b2" stroke-width="2" />
              <g fill="none">
                <path v-for="w in thinWires" :key="w" :d="w" stroke="#56524c" stroke-width="6" />
                <g v-for="w in wires" :key="w">
                  <path :d="w" stroke="#504c47" stroke-width="10" />
                  <path :d="w" stroke="#a19b95" stroke-width="3" />
                </g>
                <path d="M970 278C1189 292 1420 572 1720 570" stroke="url(#fadeIn)" stroke-width="11" stroke-opacity=".9" />
                <path d="M970 278C1189 292 1420 572 1720 570" stroke="url(#fadeInCore)" stroke-width="4" />
                <path d="M1876 570C2017 570 2017 587 2160 587" stroke="url(#fadeOut)" stroke-width="10" />
                <path d="M1876 570C2017 570 2017 587 2160 587" stroke="url(#fadeOutCore)" stroke-width="4" />
              </g>
              <g>
                <circle cx="1033" cy="566" r="8" fill="#fff" stroke="#000" stroke-width="4" />
                <path d="M940 543h82q10 0 10 8v30q0 8-10 8h-82z" fill="#eeeeec" stroke="#444" stroke-width="2" />
                <path d="M974 566h12v-8M986 566h22v-12" fill="none" stroke="#bbb" stroke-width="2" />
              </g>
              <g v-for="n in nodes" :key="n.name">
                <circle v-for="p in n.left" :key="p.label" :cx="n.x - 1" :cy="p.y" r="8" fill="#fff" stroke="#000" stroke-width="4" />
                <circle v-for="p in n.right" :key="p.label" :cx="n.x + n.w + 1" :cy="p.y" r="8" fill="#fff" stroke="#000" stroke-width="4" />
                <rect :x="n.x" :y="n.y" :width="n.w" :height="n.h" rx="6" :fill="`url(#${n.kind})`" stroke="#333" stroke-width="2" />
                <rect :x="n.x + 2" :y="n.y + 2" :width="n.w - 4" height="18" rx="4" fill="url(#gloss)" />
                <rect :x="n.ix" :y="n.y + 5" width="58" :height="n.h - 9" rx="6" :fill="n.kind === 'green' ? 'url(#darkgreen)' : 'url(#dark)'" stroke="#111" stroke-width="2" />
                <rect :x="n.ix + 2" :y="n.y + 7" width="54" height="13" rx="4" fill="url(#gloss2)" />
                <text class="nodename" :class="n.kind" :transform="`translate(${n.ix + 39} ${n.y + n.h / 2}) rotate(-90)`">{{ n.name }}</text>
                <text v-for="p in [...n.left, ...n.right]" :key="p.label + p.y" class="port" :x="p.x" :y="p.y + 8">{{ p.label }}</text>
              </g>
              <g>
                <circle v-for="y in [802, 848, 894]" :key="y" cx="1514" :cy="y" r="8" fill="#fff" stroke="#000" stroke-width="4" />
                <circle cx="2097" cy="848" r="8" fill="#fff" stroke="#000" stroke-width="4" />
                <rect x="1516" y="774" width="579" height="148" rx="6" fill="url(#lav)" stroke="#333" stroke-width="2" />
                <rect x="1518" y="776" width="575" height="18" rx="4" fill="url(#gloss)" />
                <rect x="1569" y="782" width="508" height="133" fill="url(#ramp)" stroke="#222" stroke-width="3" />
                <rect x="1570" y="783" width="506" height="131" fill="url(#shadeY)" />
                <rect x="1570" y="783" width="506" height="131" fill="url(#shadeX)" />
                <path d="M1571 784h24q0 7-5 11z" fill="#f0481c" /><path d="M1571 784l19 11q-4 6-10 8z" fill="#f4a82c" /><path d="M1571 784l9 19q-4 2-9 2z" fill="#b8cc3a" />
                <path d="M1569 847H2074" stroke="#2c4a10" stroke-opacity=".75" stroke-width="2" /><path d="M1569 851H2074" stroke="#fff" stroke-opacity=".4" stroke-width="3" />
                <circle v-for="x in stops" :key="x" :cx="x" cy="848" r="7" fill="#fff" stroke="#000" stroke-width="4" />
                <text class="port" x="1546" y="810">L0</text><text class="port" x="1546" y="856">L1</text><text class="port" x="1555" y="902">t</text>
                <path d="M1772 843v20l4-3 4 8 4-2-3-8 6-1z" fill="#fff" stroke="#777" stroke-width="1.4" />
              </g>
              <g>
                <path d="M2213 1172c0-14 12-26 25-25" fill="none" stroke="#111" stroke-width="5" />
                <path d="M2205 1152l13 3-3 10-4-2z" fill="#111" stroke="#111" stroke-width="2" />
                <circle cx="2237" cy="1173" r="23" fill="#ddd" stroke="#777" stroke-width="2" />
                <circle cx="2237" cy="1173" r="19" fill="url(#compass)" stroke="#999" stroke-width="1" />
                <path d="M2217 1163l7-2-2-5zM2250 1153l1 7-6-4zM2257 1186l-8-1 4-5zM2225 1191l1-7-6 4z" fill="#fff" />
              </g>
            </svg>
            <div class="recent">
              <span class="m2">m<sup>2</sup></span>
              <svg viewBox="0 0 24 24"><path d="M2 15C2 8 10 1 17 1s8 8 4 15S2 24 2 15z" fill="#f26a50" stroke="#8c1c3c" stroke-width="1.6" /><path d="M6 13c1-5 7-9 12-9 2 4-2 9-12 9z" fill="#ffb25a" /></svg>
              <svg viewBox="0 0 24 24"><path d="M3 4q4-5 9-1 5-4 9 1v18l-5-3-4 3-4-3-5 3z" fill="#f79a14" stroke="#9c5200" stroke-width="1.4" /><path d="M12 6v14M9 10h6l-3-4zM5 20l4-1 3 2 3-2 4 1" fill="#2c1800" stroke="#2c1800" stroke-width="2" /></svg>
            </div>
          </div>
          <footer class="ghstatus"><span>...</span><span class="ver">0.9.0014</span><i></i></footer>
        </div>
      </section>
    </main>
  </div>
</template>

<style>
body { background: #000; }
</style>

<style scoped>
.desktop, .desktop * { box-sizing: border-box; }
.desktop { display: flex; min-height: 100vh; padding: 0 63px 2px 62px; background: #000; font: 13px/16px "Noto Sans", sans-serif; color: #333; }
button { padding: 0; border: 0; background: none; font: inherit; color: inherit; white-space: nowrap; }
h1, h2, p { margin: 0; font: inherit; }
i { font-style: normal; }
svg { display: block; }
.rhino { position: relative; display: flex; flex: 1; flex-direction: column; min-width: 0; overflow: hidden; background: #ededed; }

.menubar { display: flex; align-items: center; gap: 18px; height: 26px; padding: 0 9px 2px; background: linear-gradient(#fff 0, #f4f5fc 8px, #dbdff4 9px, #dfe3f6 20px, #fafafd 26px); color: #777a86; }
.command { display: flex; height: 45px; padding-left: 10px; background: #f2f2f2; font: 14px/20px "Liberation Sans", sans-serif; color: #444; }
.lines { flex: 1; min-width: 0; background: #fff; }
.line { display: flex; gap: 10px; height: 22px; overflow: hidden; line-height: 22px; white-space: nowrap; }
.line .lead { margin-right: -3px; }
.line.entry { height: 23px; border-top: 2px solid #555; line-height: 18px; }
.entry i { font-style: italic; }
.entry b { color: #222; }
.scroller { display: flex; flex-wrap: wrap; justify-content: flex-end; width: 44px; padding-right: 6px; background: #eee; color: #222; font-size: 12px; line-height: 12px; }
.scroller span { width: 100%; text-align: right; }
.scroller .more { padding-right: 18px; }

.bar { display: flex; height: 44px; padding-left: 14px; border-top: 8px solid #d2d2d2; background: linear-gradient(#f2f2f2, #dedede); box-shadow: inset 0 1px #fff; }
.bar.second { height: 34px; padding-bottom: 2px; border-top: 1px solid #c2c2c2; }
.strip { display: flex; width: 898px; }
.strip.tools { width: 797px; border-right: 1px solid #aaa; }
.strip.dims { width: 102px; margin-left: 8px; }
.strip button { position: relative; display: flex; flex: 1; align-items: center; justify-content: center; }
.strip svg { width: 26px; height: 26px; }
.bar.second svg { width: 24px; height: 24px; }
.marked::before { content: ""; position: absolute; left: 3px; bottom: 1px; border-left: 5px solid #444; border-top: 5px solid transparent; }
.marked::after { content: ""; position: absolute; right: 2px; top: 3px; border-right: 5px solid #555; border-bottom: 4px solid transparent; }

.work { display: flex; flex: 1; min-height: 0; }
.palette { display: flex; width: 69px; padding: 9px 1px 0 2px; background: #eee; }
.col { display: flex; flex: 1; flex-direction: column; height: 500px; border-right: 1px solid #bbb; background: linear-gradient(90deg, #f2f2f2, #e0e0e0); }
.col button { display: flex; flex: 1; align-items: center; justify-content: center; }
.col svg { width: 25px; height: 25px; }
.viewport { position: relative; flex: 1; min-width: 0; overflow: hidden; background: #9f9f9f; }
.viewport h2 { width: 109px; height: 20px; padding-left: 9px; background: #93b3da; font: bold 16px/18px "Liberation Sans", sans-serif; color: #111; }
.voronoi { position: absolute; left: 179px; top: 291px; width: 620px; height: 610px; }
.axes { position: absolute; left: 36px; bottom: 0; width: 56px; height: 64px; font: 15px "Liberation Sans", sans-serif; fill: #555; }
.panel { display: flex; flex-direction: column; width: 247px; border-left: 10px solid #eee; background: #fff; }
.grip { height: 23px; padding: 3px 1px; background: #d6d6d6; text-align: right; }
.grip button { width: 15px; height: 16px; border: 2px solid #a83c4c; border-radius: 3px; background: #d88c94; color: #fff; font-size: 11px; line-height: 10px; }
.ptools { display: flex; justify-content: flex-end; height: 28px; padding: 3px 22px; border-bottom: 1px solid #999; background: #eee; font-size: 15px; color: #222; }
.phead { height: 28px; padding: 7px 0 0 204px; border-bottom: 1px solid #ddd; overflow: hidden; color: #444; }
.pbody { flex: 1; background: linear-gradient(#f0f0f0 20px, #fff 21px); }
.hscroll { display: flex; align-items: center; height: 23px; padding: 0 6px; border-bottom: 2px solid #999; background: #ececec; color: #333; }
.thumb { width: 87px; height: 17px; margin-left: 8px; border: 1px solid #aaa; border-radius: 2px; background: linear-gradient(#f4f4f4, #d0d0d0); text-align: center; font-size: 9px; line-height: 14px; color: #666; }
.hscroll .end { margin-left: auto; }

.osnap { display: flex; align-items: center; height: 28px; padding-left: 14px; border-top: 1px solid #fff; background: #eee; }
.osnap label, .mode { display: flex; align-items: center; gap: 6px; flex: 0 0 auto; width: 66px; color: #444; }
.osnap input { flex: none; width: 14px; height: 14px; margin: 0; appearance: none; border: 1px solid #999; background: linear-gradient(135deg, #ddd, #fff); }
.osnap input:checked { background: #dfe6f2; }
.osnap input:checked::after { content: ""; display: block; width: 5px; height: 9px; margin: 0 0 0 4px; border: solid #34488c; border-width: 0 2px 2px 0; transform: rotate(40deg); }
.mode { gap: 3px; }
.mode i { flex: none; width: 17px; height: 17px; border: 1px solid #888; border-radius: 4px; background: linear-gradient(#fff, #ddd); }
.mode i.on { background: #7f95a4; border-color: #456; }
.status { display: flex; align-items: center; height: 24px; padding-left: 12px; border-top: 2px solid #999; background: #f1ebeb; color: #444; }
.status > * { flex: none; height: 22px; line-height: 22px; }
.cplane { width: 59px; }
.coord { width: 104px; }
.zed { width: 211px; }
.layer { display: flex; align-items: center; gap: 4px; width: 200px; }
.layer i { width: 14px; height: 14px; background: #000; }
.status button { width: 54px; border-left: 1px solid #ddd; }
.status .on { font-weight: bold; font-size: 12px; color: #222; }
.status .rec { width: 130px; border-right: 1px solid #ddd; }

.gh { position: absolute; left: 903px; right: 53px; top: 38px; bottom: 102px; display: flex; flex-direction: column; padding: 0 10px 8px 8px; border: 1px solid #333; border-radius: 9px 9px 7px 7px; background: linear-gradient(#808080 36px, #a8a8a8 100px, #a4a4a4 322px, #5a5a5a 328px, #5a5a5a 97%, #777); box-shadow: inset 0 0 0 2px #8c8c8c, 0 4px 18px 6px rgba(0, 0, 0, .55); }
.title { display: flex; flex: none; justify-content: space-between; height: 35px; margin: 0 -8px; padding: 0 6px 0 8px; border-radius: 7px 7px 0 0; background: linear-gradient(90deg, #a8a8a8, #999 120px, #606060 190px, #5c5c5c 480px, #636363 800px, #5c5c5c 1080px, #8a8a8a 1200px, #999); }
.title h1 { padding-top: 10px; color: #333; text-shadow: 0 0 8px #ddd; }
.caption { display: flex; height: 24px; border: 1px solid #bbb; border-top: 0; border-radius: 0 0 5px 5px; overflow: hidden; }
.caption button { width: 33px; border-right: 1px solid #bbb; background: linear-gradient(#b8b8b8 45%, #777 50%, #999); }
.caption button svg { width: 32px; height: 22px; margin: auto; }
.caption .close { width: 55px; border: 0; background: linear-gradient(#dc9484 40%, #c43018 50%, #d4604a); }
.inner { display: flex; flex: 1; flex-direction: column; min-height: 0; background: #eee; }
.ghmenu { display: flex; align-items: center; gap: 22px; height: 29px; padding: 0 12px 0 17px; background: linear-gradient(#f2f2f2, #f8f8f8); font-size: 12px; }
.doc { margin-left: auto; }
.tabs { display: flex; align-items: flex-end; gap: 28px; height: 27px; padding-left: 1px; border-bottom: 1px solid #bbb; font-size: 12px; color: #888; }
.tabs button { height: 22px; }
.tabs .active { width: 69px; height: 25px; margin-right: -15px; margin-bottom: -1px; padding-bottom: 4px; border: 1px solid #ccc; border-bottom: 0; border-radius: 7px 7px 0 0; background: #fff; color: #333; }
.ribbon { display: flex; gap: 4px; height: 105px; padding: 3px 4px 15px; border-bottom: 1px solid #888; background: linear-gradient(#d9d9d9, #f0f0f0); }
.rpanel { display: flex; flex-direction: column; height: 86px; border: 1px solid #aaa; border-radius: 5px; background: linear-gradient(#dadada, #efefef); overflow: hidden; }
.groups { display: flex; flex: 1; padding: 1px 2px 1px 1px; }
.group { display: grid; grid-template-rows: 33px 33px; grid-auto-flow: column; grid-auto-columns: 33px; align-content: center; }
.group + .group { margin-left: 6px; padding-left: 5px; border-left: 1px solid #bbb; }
.group button { position: relative; display: flex; align-items: center; justify-content: center; }
.group svg { width: 28px; height: 28px; }
.glyph { position: absolute; inset: 0; display: flex; align-items: center; justify-content: center; color: #fff; font: bold 20px/20px "Liberation Serif", serif; }
.glyph.pi { font-size: 17px; }
.glyph.abc { color: #222; font: italic bold 13px/14px "Liberation Sans", sans-serif; transform: rotate(-25deg); }
.rname { display: flex; height: 16px; padding: 0 4px; background: #222; color: #ccc; font-size: 12px; line-height: 15px; }
.rname span { flex: 1; text-align: center; }
.ghtools { display: flex; align-items: center; height: 38px; padding: 0 2px; background: linear-gradient(#fff, #f0f0f0); }
.ghtools button { display: flex; flex: none; align-items: center; justify-content: center; gap: 5px; height: 32px; }
.ghtools svg { width: 26px; height: 26px; }
.t1 { width: 36px; }
.t2 { width: 48px; }
.t3 { width: 34px; }
.picked { border: 2px solid #a4cdee; background: #f0f8ff; }
.fill { flex: 1; }
.sep { flex: none; width: 1px; height: 26px; margin: 0 4px 0 8px; background: #ccc; }
.sep.wide { margin: 0 8px 0 9px; }
.sep.near { margin: 0 1px; }
.ghtools em { width: 0; height: 0; border: 4px solid transparent; border-top: 4px solid #222; border-bottom: 0; }
.zoom { position: relative; display: flex; align-items: center; width: 82px; height: 28px; border: 1px solid #eee; background: #fff; }
.zoom em { position: absolute; right: 5px; }
.zoom select { width: 80px; height: 26px; padding: 0 3px; appearance: none; border: 0; background: none; font: inherit; color: #333; }
.canvas { position: relative; flex: 1; min-height: 0; overflow: hidden; background: #d4cdc7; }
.graph { position: absolute; inset: 0; width: 100%; height: 100%; }
.nodename { font: bold 29px "Noto Sans", sans-serif; fill: #fff; text-anchor: middle; }
.nodename.green { fill: #d4f8c0; }
.port { font: 24px "Noto Sans", sans-serif; fill: #2c2c2c; text-anchor: middle; }
.recent { position: absolute; left: 0; bottom: 0; display: flex; align-items: center; gap: 10px; width: 110px; height: 34px; padding: 0 6px; border: 2px solid #555; border-left: 0; background: linear-gradient(#eee, #999); }
.recent svg { flex: none; width: 25px; height: 25px; }
.m2 { font: italic bold 21px/22px "Liberation Serif", serif; color: #111; }
.m2 sup { font-size: 12px; line-height: 8px; }
.ghstatus { display: flex; align-items: center; gap: 6px; height: 29px; padding: 0 3px 0 6px; background: #f7f7f7; font-size: 12px; color: #888; }
.ghstatus .ver { margin-left: auto; }
.ghstatus i { width: 12px; height: 12px; background: repeating-linear-gradient(135deg, #aaa 0 2px, transparent 2px 4px); clip-path: polygon(100% 0, 100% 100%, 0 100%); }
</style>
